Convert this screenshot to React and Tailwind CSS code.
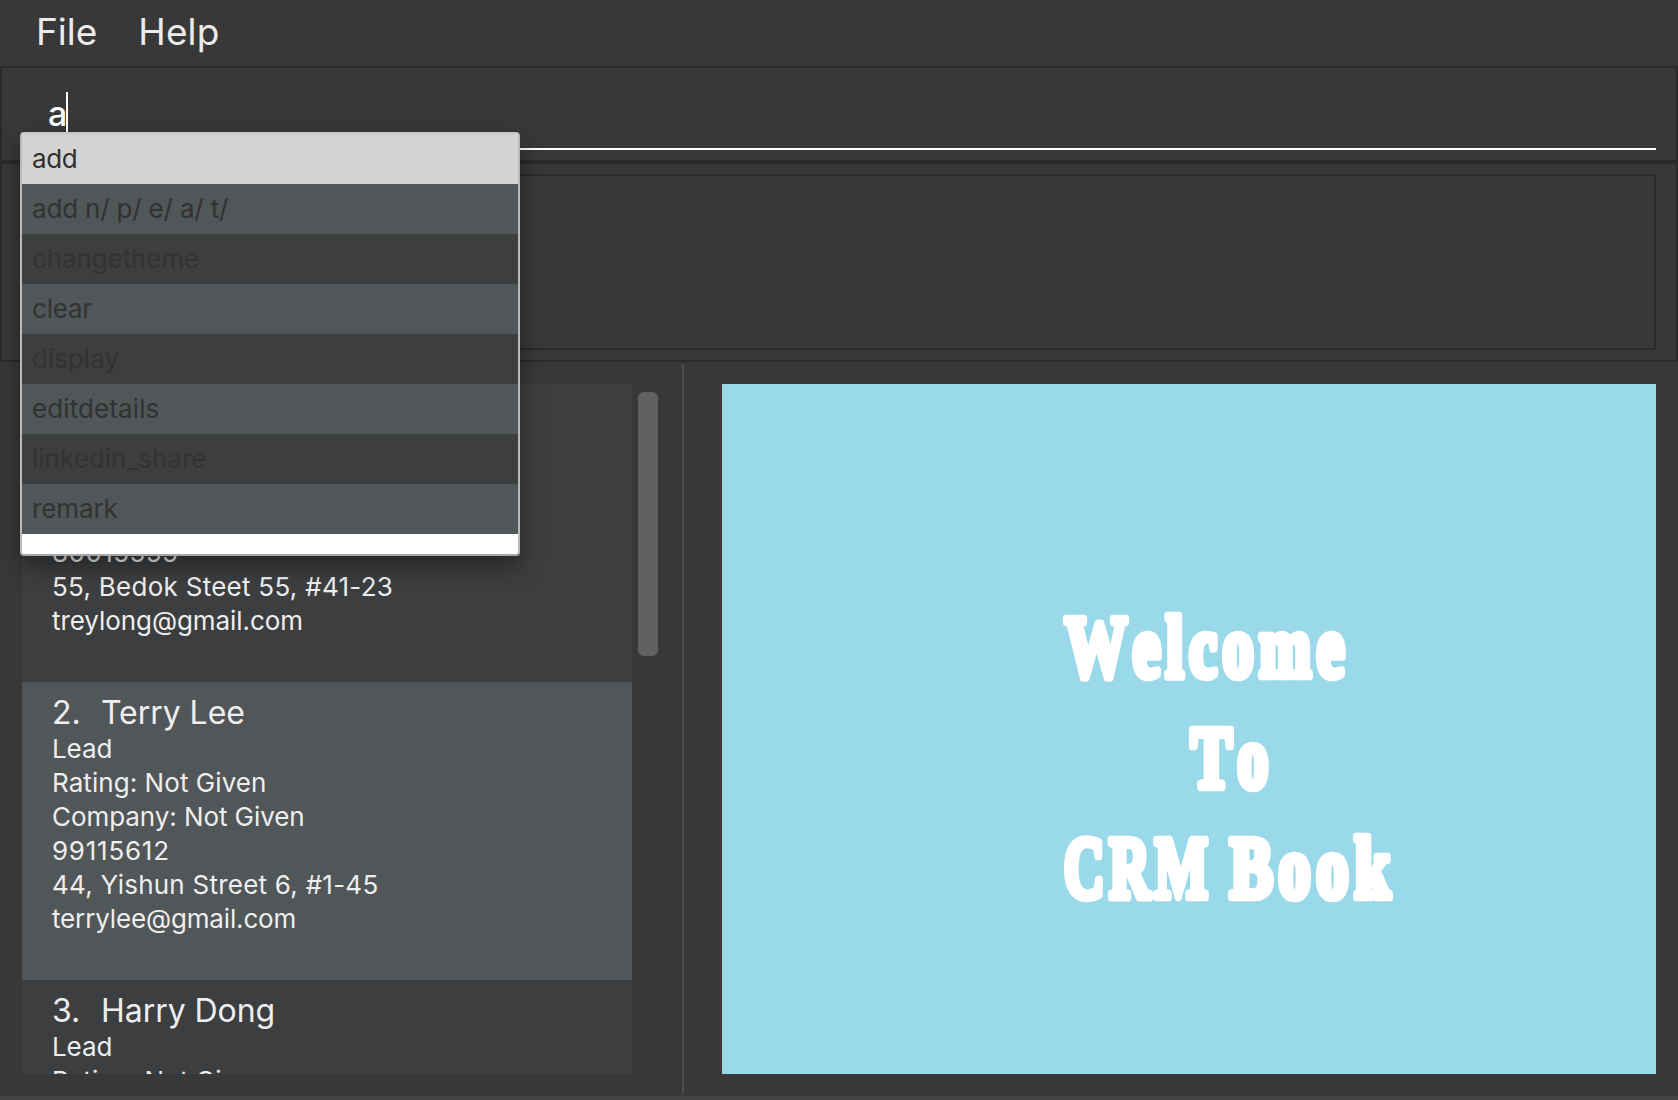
const suggestions = [
  { text: 'add', style: 'bg-[#d3d3d3] text-[#2f2f2f] tracking-[-0.4px]' },
  { text: 'add n/ p/ e/ a/ t/', style: 'bg-[#515658] text-[#323232] tracking-[-0.18px]' },
  { text: 'changetheme', style: 'bg-[#3c3e3f] text-[#333333] tracking-[-0.1px]' },
  { text: 'clear', style: 'bg-[#515658] text-[#323232] tracking-[-0.2px]' },
  { text: 'display', style: 'bg-[#3c3e3f] text-[#333333]' },
  { text: 'editdetails', style: 'bg-[#515658] text-[#323232] tracking-[0.1px]' },
  { text: 'linkedin_share', style: 'bg-[#3c3e3f] text-[#333333]' },
  { text: 'remark', style: 'bg-[#515658] text-[#323232] tracking-[-0.1px]' },
];

const status = { text: 'Lead', style: 'tracking-[-0.1px]' };
const rating = { text: 'Rating: Not Given', style: 'tracking-[0.06px]' };
const company = { text: 'Company: Not Given', style: 'tracking-[-0.07px]' };

const people = [
  {
    id: 1,
    name: 'Trey Long',
    bg: 'bg-[#3c3e3f]',
    lines: [
      status,
      rating,
      company,
      { text: '80015555', style: 'tracking-[0.45px]' },
      { text: '55, Bedok Steet 55, #41-23', style: 'tracking-[0.27px]' },
      { text: 'treylong@gmail.com', style: 'tracking-[-0.07px]' },
    ],
  },
  {
    id: 2,
    name: 'Terry Lee',
    bg: 'bg-[#515658]',
    lines: [
      status,
      rating,
      company,
      { text: '99115612', style: 'tracking-[0.75px]' },
      { text: '44, Yishun Street 6, #1-45', style: 'tracking-[0.24px]' },
      { text: 'terrylee@gmail.com', style: 'tracking-[-0.15px]' },
    ],
  },
  { id: 3, name: 'Harry Dong', bg: 'bg-[#3c3e3f]', lines: [status, rating] },
];

function MenuBar() {
  return (
    <nav className="flex h-[66px] shrink-0 items-start gap-[41px] pl-[36px] text-[37px] leading-[64px] text-[#ececec]">
      <span>File</span>
      <span className="tracking-[0.1px]">Help</span>
    </nav>
  );
}

function Suggestions() {
  return (
    <ul className="absolute top-[64px] left-[18px] z-10 w-[500px] overflow-hidden rounded-[4px] border-2 border-t-[#c6c6c6] border-r-[#b9b9b9] border-b-[#a6a6a6] border-l-[#b9b9b9] bg-white pb-[20px] shadow-[0_10px_24px_rgba(0,0,0,0.4)]">
      {suggestions.map((s) => (
        <li key={s.text} className={`h-[50px] pl-[10px] text-[26px] leading-[49px] ${s.style}`}>
          {s.text}
        </li>
      ))}
    </ul>
  );
}

function CommandBox() {
  return (
    <section className="relative h-[96px] shrink-0 border-2 border-[#2a2a2a] px-[20px] pt-[18px]">
      <div className="flex h-[64px] items-start border-b-2 border-white pl-[26px] text-[34px] text-white">
        <span className="mt-[6px] w-[18px] leading-[44px] font-medium">a</span>
        <span className="mt-[6px] h-[42px] w-[2px] bg-white" />
      </div>
      <Suggestions />
    </section>
  );
}

function Person({ person }) {
  return (
    <article className={`h-[298px] shrink-0 pt-[12px] pl-[30px] text-[#eeeeee] ${person.bg}`}>
      <h2 className="flex text-[32px] leading-[38px]">
        <span className="w-[49px]">{person.id}.</span>
        <span className="tracking-[-0.05px]">{person.name}</span>
      </h2>
      {person.lines.map((line) => (
        <p key={line.text} className={`text-[26px] leading-[34px] ${line.style}`}>
          {line.text}
        </p>
      ))}
    </article>
  );
}

function Welcome() {
  return (
    <svg viewBox="0 0 934 690" className="h-[690px] w-[934px] shrink-0 bg-[#9ad9e9]">
      <g
        fill="#fff"
        stroke="#fff"
        strokeWidth="8.5"
        strokeLinejoin="round"
        fontFamily="'Liberation Serif', serif"
        fontWeight="700"
        fontSize="86"
        letterSpacing="8"
        className="[font-kerning:none]"
      >
        <text x="343" y="292" textLength="285" lengthAdjust="spacingAndGlyphs">Welcome</text>
        <text x="469" y="403" textLength="83" lengthAdjust="spacingAndGlyphs">To</text>
        <text x="342" y="513" textLength="149" lengthAdjust="spacingAndGlyphs">CRM</text>
        <text x="508" y="513" textLength="166" lengthAdjust="spacingAndGlyphs">Book</text>
      </g>
    </svg>
  );
}

export default function App() {
  return (
    <div className="flex h-[1100px] w-[1678px] flex-col overflow-hidden bg-[#383838] font-['Inter',sans-serif]">
      <MenuBar />
      <CommandBox />
      <section className="h-[200px] shrink-0 border-2 border-[#2a2a2a] px-[20px] pt-[10px]">
        <div className="h-[176px] border-2 border-[#2a2a2a]" />
      </section>
      <main className="flex h-[734px] shrink-0">
        <div className="flex w-[682px] shrink-0 gap-[6px] pt-[22px] pl-[22px]">
          <div className="flex h-[690px] w-[610px] flex-col overflow-hidden">
            {people.map((p) => (
              <Person key={p.id} person={p} />
            ))}
          </div>
          <div className="mt-[8px] h-[264px] w-[20px] rounded-[6px] bg-[#606060]" />
        </div>
        <div className="mt-[2px] h-[730px] w-[2px] shrink-0 bg-[#4b4b4b]" />
        <div className="pt-[22px] pl-[38px]">
          <Welcome />
        </div>
      </main>
      <footer className="h-[4px] shrink-0 bg-[#454344]" />
    </div>
  );
}
